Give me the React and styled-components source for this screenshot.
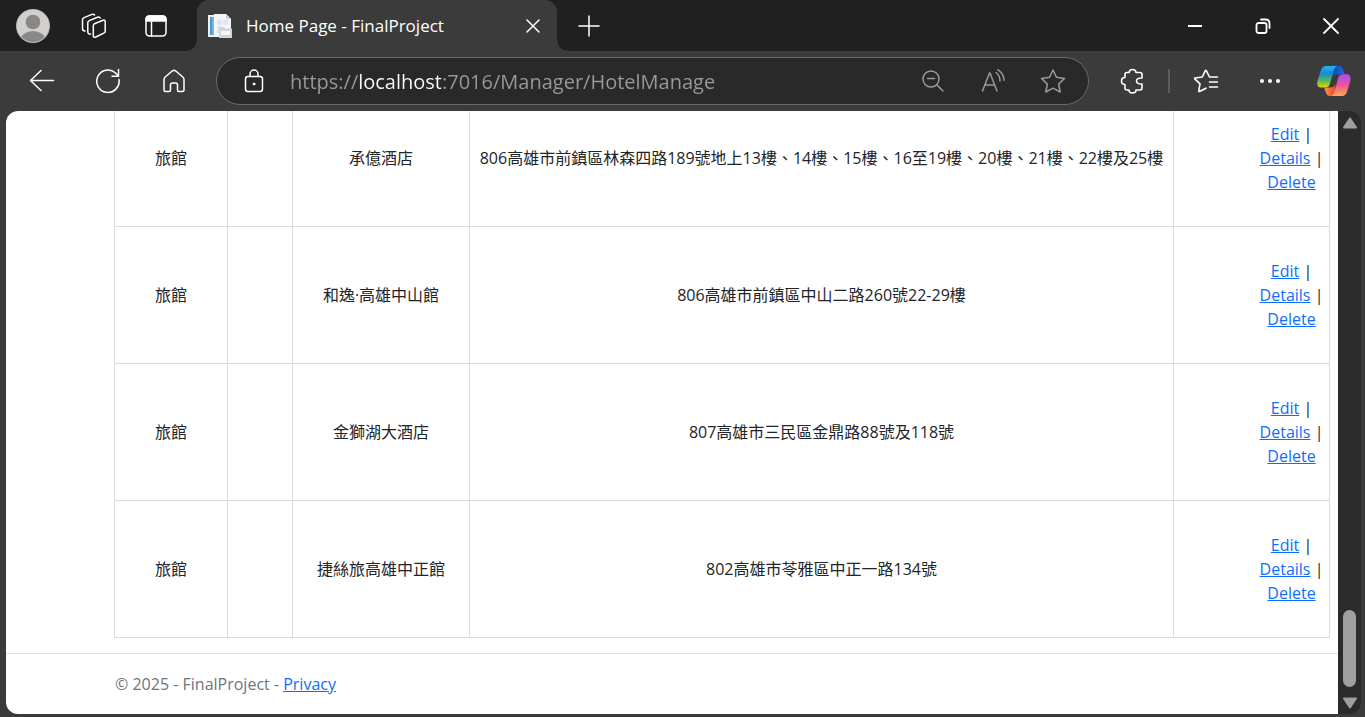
import React from "react";
import styled, { createGlobalStyle } from "styled-components";

const GlobalStyle = createGlobalStyle`
  * { box-sizing: border-box; }
  body {
    margin: 0;
    background: #3b3b3b;
    font-family: "Open Sans", "Noto Sans CJK TC", sans-serif;
  }
`;

const Window = styled.div`
  height: 100vh;
  display: flex;
  flex-direction: column;
  overflow: hidden;
  background: #3b3b3b;
`;

const TitleBar = styled.header`
  flex: none;
  height: 51px;
  display: flex;
  align-items: center;
  background: #202020;
`;

const Workspace = styled.div`
  display: flex;
  align-items: center;
  gap: 26px;
  padding: 0 23px 0 16px;
`;

const IconButton = styled.button`
  flex: none;
  width: ${(p) => p.$width || 36}px;
  height: 36px;
  padding: 0;
  border: 0;
  background: none;
  color: ${(p) => (p.$muted ? "#9a9a9a" : "#ffffff")};
  display: flex;
  align-items: center;
  justify-content: center;
`;

const Tab = styled.div`
  position: relative;
  width: 360px;
  height: 51px;
  padding: 0 6px 0 11px;
  display: flex;
  align-items: center;
  gap: 14px;
  background: #3b3b3b;
  border-radius: 12px 12px 0 0;
  color: #ffffff;

  &::before,
  &::after {
    content: "";
    position: absolute;
    bottom: 0;
    width: 10px;
    height: 10px;
  }
  &::before {
    right: 100%;
    background: radial-gradient(circle at 0 0, #202020 9px, #3b3b3b 10px);
  }
  &::after {
    left: 100%;
    background: radial-gradient(circle at 100% 0, #202020 9px, #3b3b3b 10px);
  }
`;

const TabTitle = styled.span`
  flex: 1;
  font-size: 17px;
  line-height: 24px;
  white-space: nowrap;
`;

const NewTab = styled(IconButton)`
  margin-left: 14px;
`;

const WindowControls = styled.div`
  margin-left: auto;
  display: flex;
`;

const Toolbar = styled.nav`
  flex: none;
  height: 60px;
  padding: 0 7px 0 18px;
  display: flex;
  align-items: center;
`;

const NavButtons = styled.div`
  display: flex;
  gap: 18px;
  margin-right: 18px;
`;

const AddressBar = styled.form`
  flex: 1;
  min-width: 0;
  height: 48px;
  padding: 0 17px 0 19px;
  display: flex;
  align-items: center;
  gap: 24px;
  border: 1px solid #6a6a6a;
  border-radius: 24px;
  background: #292929;
`;

const UrlInput = styled.input`
  flex: 1;
  min-width: 0;
  height: 36px;
  margin-left: -6px;
  padding: 0;
  border: 0;
  outline: 0;
  font: 20px/32px "Open Sans", sans-serif;
  background: linear-gradient(90deg, #9a9a9a 68px, #ffffff 68px 151px, #9a9a9a 151px);
  background-clip: text;
  -webkit-text-fill-color: transparent;
`;

const ToolButtons = styled.div`
  margin-left: 19px;
  display: flex;
  align-items: center;
  gap: 16px;
`;

const Divider = styled.span`
  width: 2px;
  height: 24px;
  margin: 0 -4px;
  background: #5c5c5c;
`;

const Viewport = styled.div`
  flex: 1;
  min-height: 0;
  margin: 0 4px 3px 6px;
  display: flex;
  border-radius: 12px;
  overflow: hidden;
  background: #2b2b2b;
`;

const Page = styled.div`
  flex: 1;
  min-width: 0;
  display: flex;
  flex-direction: column;
  justify-content: flex-end;
  overflow: hidden;
  background: #ffffff;
  color: #212529;
  font-size: 16px;
  line-height: 24px;
`;

const Main = styled.main`
  flex: none;
  padding: 0 8px 15px 108px;
`;

const HotelTable = styled.table`
  width: 100%;
  table-layout: fixed;
  border-collapse: collapse;
`;

const Col = styled.col`
  width: ${(p) => (p.$width ? `${p.$width}px` : "auto")};
`;

const Cell = styled.td`
  height: 137px;
  padding: 8px;
  border: 1px solid #dcdcdc;
  text-align: center;
  vertical-align: middle;
  white-space: nowrap;
`;

const ActionCell = styled(Cell)`
  padding: 8px 0 8px 80px;
`;

const Link = styled.a`
  color: #0d6efd;
  text-decoration: underline;
`;

const Footer = styled.footer`
  flex: none;
  height: 61px;
  padding-left: 109px;
  border-top: 1px solid #dee2e6;
  color: #6c757d;
  line-height: 60px;
`;

const ScrollTrack = styled.div`
  flex: none;
  width: 23px;
  padding: 6px 0 5px;
  display: flex;
  flex-direction: column;
  align-items: center;
  color: #9f9f9f;
`;

const ScrollThumb = styled.div`
  width: 13px;
  height: 77px;
  margin: auto 0 10px;
  border-radius: 7px;
  background: #9f9f9f;
`;

const Icon = ({ w = 28, h = w, sw = 2, children }) => (
  <svg
    width={w}
    height={h}
    viewBox={`0 0 ${w} ${h}`}
    fill="none"
    stroke="currentColor"
    strokeWidth={sw}
    strokeLinecap="round"
    strokeLinejoin="round"
    aria-hidden="true"
  >
    {children}
  </svg>
);

const Avatar = () => (
  <svg width="34" height="34" viewBox="0 0 34 34" aria-hidden="true">
    <defs>
      <clipPath id="face"><circle cx="17" cy="17" r="16" /></clipPath>
    </defs>
    <circle cx="17" cy="17" r="17" fill="#bdbab7" />
    <circle cx="17" cy="17" r="16" fill="#d2d0ce" />
    <g clipPath="url(#face)" fill="#8a8886">
      <circle cx="17" cy="13" r="7.3" />
      <ellipse cx="17" cy="31" rx="12.5" ry="9" />
    </g>
  </svg>
);

const Favicon = () => (
  <svg width="24" height="24" viewBox="0 0 24 24" aria-hidden="true">
    <defs>
      <linearGradient id="strip" x1="0" x2="1"><stop stopColor="#3d8fc4" /><stop offset="1" stopColor="#7fc0e8" /></linearGradient>
    </defs>
    <path d="M0 1h7v22H0z" fill="#eef2f5" />
    <path d="M2 3h4v18H2z" fill="url(#strip)" />
    <path d="M6 0h12l5 5v18H6z" fill="#f4f5f8" />
    <path d="M9 6h5v5H9zM15 6h5v5h-5zM9 12h5v7H9z" fill="#e2e7ef" />
    <path d="M18 0v5h5z" fill="#cfd3da" />
    <path d="M11 13h5l1 1.500h7V24H11z" fill="#d0d5dc" />
    <path d="M13 17h9v4h-9z" fill="#f4f7fa" />
  </svg>
);

const Copilot = () => (
  <svg width="36" height="32" viewBox="0 0 36 32" aria-hidden="true">
    <defs>
      <linearGradient id="cpA" x1="0" y1="0" x2="0" y2="1">
        <stop stopColor="#22b5f5" /><stop offset=".35" stopColor="#168bd8" /><stop offset=".68" stopColor="#52b95c" /><stop offset="1" stopColor="#f4d000" />
      </linearGradient>
      <linearGradient id="cpB" x1="0" y1="0" x2="0" y2="1">
        <stop stopColor="#a64df0" /><stop offset=".5" stopColor="#ee5199" /><stop offset="1" stopColor="#ffaa4e" />
      </linearGradient>
      <linearGradient id="cpC" x1="0" x2="1"><stop stopColor="#1546b8" /><stop offset="1" stopColor="#1a6be0" /></linearGradient>
      <linearGradient id="cpD" x1="0" x2="1"><stop stopColor="#ff9a3c" /><stop offset="1" stopColor="#ea4335" /></linearGradient>
    </defs>
    <path d="M17 1h6c2.500 0 3.600 1.800 4.300 4.200l1.200 4h-5c-3 0-5 .7-6 4z" fill="url(#cpC)" />
    <path d="M19 31h-5c-2.600 0-3.700-1.800-4.400-4.200L8.300 22.500H14c3 0 4.500-1 5.500-4z" fill="url(#cpD)" />
    <path d="M10.500 1H22c-2.500 0-3.500 2-4.300 4.700L14 18.500c-.9 3-2.300 4-5 4H5c-3.500 0-4.400-3-3.500-6.500L4.700 6c1.100-3.500 2.500-5 5.800-5z" fill="url(#cpA)" />
    <path d="M25.500 31H14.300c2.500 0 3.500-2 4.200-4.500L22 13.500c.9-3 2.500-4.300 5.200-4.300h3.600c3.500 0 4.400 3 3.500 6.500L31.300 26c-1.100 3.500-2.500 5-5.800 5z" fill="url(#cpB)" />
  </svg>
);

const hotels = [
  { name: "承億酒店", address: "806高雄市前鎮區林森四路189號地上13樓、14樓、15樓、16至19樓、20樓、21樓、22樓及25樓" },
  { name: "和逸·高雄中山館", address: "806高雄市前鎮區中山二路260號22-29樓" },
  { name: "金獅湖大酒店", address: "807高雄市三民區金鼎路88號及118號" },
  { name: "捷絲旅高雄中正館", address: "802高雄市苓雅區中正一路134號" },
];

const HotelRow = ({ hotel }) => (
  <tr>
    <Cell>旅館</Cell>
    <Cell />
    <Cell>{hotel.name}</Cell>
    <Cell>{hotel.address}</Cell>
    <ActionCell>
      <Link href="#edit">Edit</Link> |<br />
      <Link href="#details">Details</Link> |<br />
      <Link href="#delete">Delete</Link>
    </ActionCell>
  </tr>
);

export default function App() {
  return (
    <Window>
      <GlobalStyle />
      <TitleBar>
        <Workspace>
          <IconButton $width={34} aria-label="Profile"><Avatar /></IconButton>
          <IconButton aria-label="Workspaces">
            <Icon w={26} sw={1.5}>
              <path d="M13.500 10.800 22 7.300Q24.200 6.500 24.200 8.800V18Q24.200 19.500 22.800 20.200L14.800 24Q12.300 25 12.300 22.500V12.800Q12.300 11.300 13.500 10.800Z" />
              <path d="M9.500 21Q6.800 21.200 6.800 18.800V9.800Q6.800 8.300 8.200 7.600L16.500 4.200Q18.600 3.500 19.200 5" />
              <path d="M4 18Q1.500 18 1.500 15.800V6.800Q1.500 5.300 3 4.600L11 1.400Q12.800.8 13.500 2" />
            </Icon>
          </IconButton>
          <IconButton aria-label="Tab actions">
            <Icon w={24} sw={1.5}>
              <rect x="2" y="2" width="20" height="20" rx="3.500" />
              <path d="M2 7V5.500Q2 2 5.500 2h13Q22 2 22 5.500V7z" fill="currentColor" />
              <path d="M7.500 8v14" />
            </Icon>
          </IconButton>
        </Workspace>
        <Tab>
          <Favicon />
          <TabTitle>Home Page - FinalProject</TabTitle>
          <IconButton aria-label="Close tab"><Icon w={14} sw={1.5}><path d="m1 1 12 12M13 1 1 13" /></Icon></IconButton>
        </Tab>
        <NewTab aria-label="New tab"><Icon w={22} sw={1.5}><path d="M11 1v20M1 11h20" /></Icon></NewTab>
        <WindowControls>
          <IconButton $width={68} aria-label="Minimize"><Icon w={16}><path d="M1 8h14" strokeLinecap="butt" /></Icon></IconButton>
          <IconButton $width={68} aria-label="Restore">
            <Icon w={16} sw={1.8}><rect x="1.500" y="5" width="10" height="10" rx="2" /><path d="M6 1.500h4.500q4 0 4 4V10" /></Icon>
          </IconButton>
          <IconButton $width={68} aria-label="Close"><Icon w={16} sw={1.8}><path d="m1 1 14 14M15 1 1 15" /></Icon></IconButton>
        </WindowControls>
      </TitleBar>

      <Toolbar>
        <NavButtons>
          <IconButton $width={48} aria-label="Back"><Icon w={26} sw={1.5}><path d="M24.500 12.500H2M12 2.500 1.500 12.500 12 22.500" /></Icon></IconButton>
          <IconButton $width={48} aria-label="Refresh"><Icon w={26} sw={1.5}><path d="M24 11.500A11.200 11.200 0 1 1 20.500 5L23.500 8M23.500 1.500V8.200H17" /></Icon></IconButton>
          <IconButton $width={48} aria-label="Home">
            <Icon w={24} sw={1.5}><path d="M2 10.500Q2 9 3.200 8L10.500 1.800Q12 .7 13.500 1.800L20.800 8Q22 9 22 10.500V21Q22 22.500 20.500 22.500H17Q15.500 22.500 15.500 21V16Q15.500 14 13.500 14H10.500Q8.500 14 8.500 16V21Q8.500 22.500 7 22.500H3.500Q2 22.500 2 21Z" /></Icon>
          </IconButton>
        </NavButtons>
        <AddressBar onSubmit={(e) => e.preventDefault()}>
          <IconButton type="button" aria-label="Site information">
            <Icon w={20} h={24} sw={1.5}>
              <rect x="1.500" y="7.500" width="17" height="15" rx="2.500" />
              <path d="M6 7.500V5a4 4 0 0 1 8 0v2.500" />
              <circle cx="10" cy="15" r="1" fill="currentColor" strokeWidth="1" />
            </Icon>
          </IconButton>
          <UrlInput aria-label="Address" defaultValue="https://localhost:7016/Manager/HotelManage" spellCheck={false} />
          <IconButton type="button" $muted aria-label="Zoom out">
            <Icon w={22} sw={1.5}><circle cx="9" cy="9" r="8" /><path d="m15 15 6 6M5.500 8.500h7" /></Icon>
          </IconButton>
          <IconButton type="button" $muted aria-label="Read aloud">
            <Icon w={24} sw={1.5}><path d="M1.500 22 8.500 4h.5l7 18M4 16h9.500M15 3.500q4 3 4 8.500M17 .8q6 3.700 6 10.500" /></Icon>
          </IconButton>
          <IconButton type="button" $muted aria-label="Add to favorites">
            <Icon w={26} sw={1.5}><path d="m13 2 3.500 7.300 8 1.100-5.800 5.600 1.500 8L13 20.200 5.800 24l1.500-8L1.500 10.400l8-1.100z" /></Icon>
          </IconButton>
        </AddressBar>
        <ToolButtons>
          <IconButton $width={48} aria-label="Extensions">
            <Icon w={24} h={26} sw={1.6}><path d="M7 4.500H9.200Q9.200 1.500 12.500 1.500T16 4.500H20Q22 4.500 22 6.500V10Q16.500 9.800 16.500 13T22 16V20Q22 22 20 22H16Q16 25 12.500 25T9 22H7Q5 22 5 20V16.500Q1.500 16.500 1.500 13T5 9.500V6.500Q5 4.500 7 4.500Z" /></Icon>
          </IconButton>
          <Divider />
          <IconButton $width={48} aria-label="Favorites">
            <Icon w={26} sw={1.6}><path d="M13 20.200 6.500 23.500Q5.600 23.800 5.800 22.700L7 15.800 1.800 10.900Q1.300 10.300 2.200 10L9.300 9 12.300 2.600Q12.800 1.900 13.300 2.600L16.500 9H24.500M16.500 14H24.500M16.500 19H24.500" /></Icon>
          </IconButton>
          <IconButton $width={48} aria-label="Settings and more">
            <Icon w={22}><g fill="currentColor" stroke="none"><circle cx="3" cy="11" r="2" /><circle cx="11" cy="11" r="2" /><circle cx="19" cy="11" r="2" /></g></Icon>
          </IconButton>
          <IconButton $width={48} aria-label="Copilot"><Copilot /></IconButton>
        </ToolButtons>
      </Toolbar>

      <Viewport>
        <Page>
          <Main>
            <HotelTable>
              <colgroup>
                <Col $width={113} /><Col $width={65} /><Col $width={177} /><Col /><Col $width={156} />
              </colgroup>
              <tbody>
                {hotels.map((h) => <HotelRow key={h.name} hotel={h} />)}
              </tbody>
            </HotelTable>
          </Main>
          <Footer>
            © 2025 - FinalProject - <Link href="#privacy">Privacy</Link>
          </Footer>
        </Page>
        <ScrollTrack>
          <svg width="16" height="12" viewBox="0 0 16 12" aria-hidden="true"><path d="M8 1.500 14 10.500H2z" fill="currentColor" stroke="currentColor" strokeWidth="2" strokeLinejoin="round" /></svg>
          <ScrollThumb />
          <svg width="16" height="12" viewBox="0 0 16 12" aria-hidden="true"><path d="M8 10.500 2 1.500h12z" fill="currentColor" stroke="currentColor" strokeWidth="2" strokeLinejoin="round" /></svg>
        </ScrollTrack>
      </Viewport>
    </Window>
  );
}
